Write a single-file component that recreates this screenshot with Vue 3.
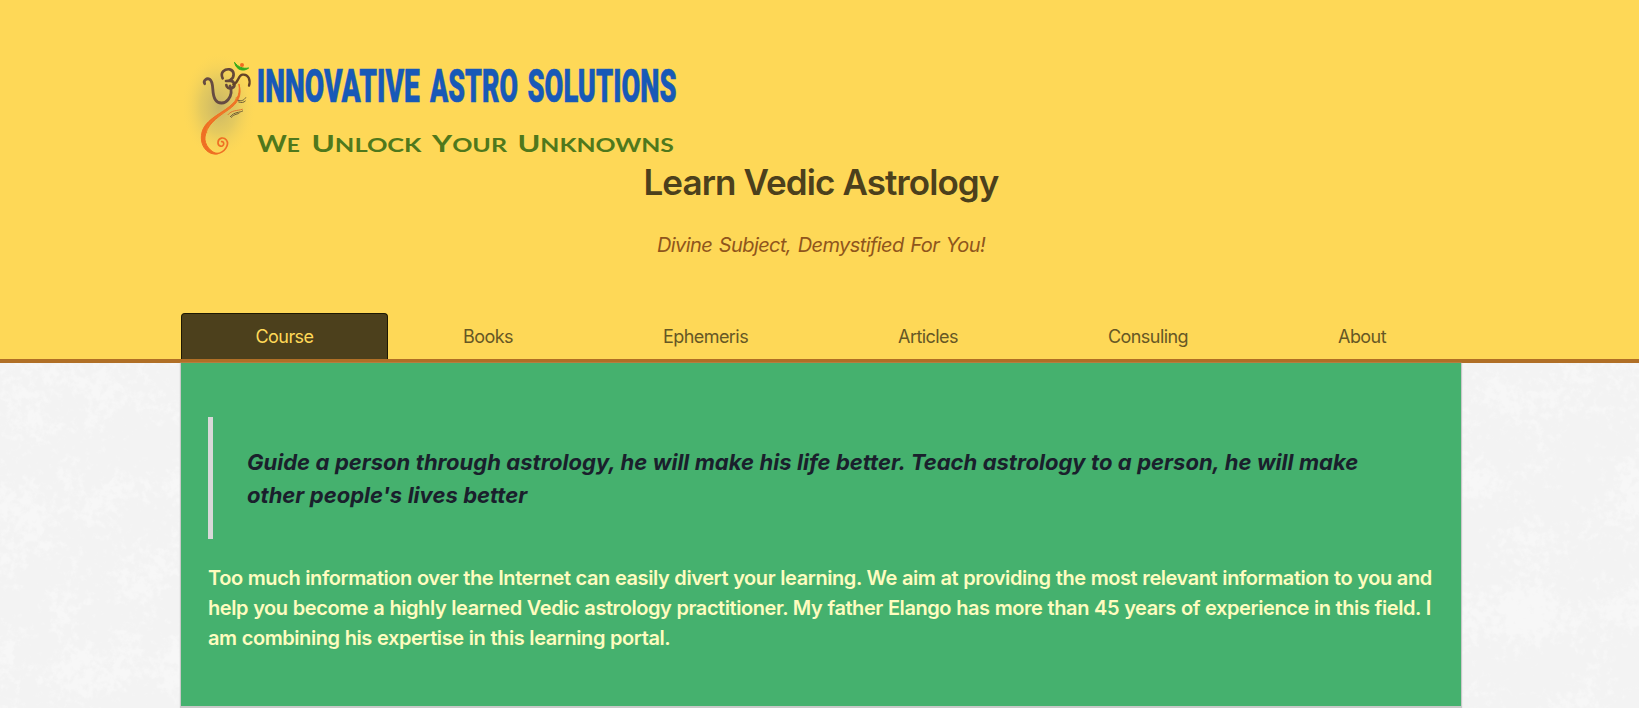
<script setup>
const tabs = ['Course', 'Books', 'Ephemeris', 'Articles', 'Consuling', 'About']
</script>

<template>
  <div class="page">
    <header class="header">
      <svg class="logo" width="510" height="110" viewBox="0 0 510 110">
        <defs>
          <radialGradient id="halo">
            <stop offset="0" stop-color="#b5a96b" stop-opacity=".75" />
            <stop offset=".5" stop-color="#cdbd66" stop-opacity=".52" />
            <stop offset="1" stop-color="#fad65a" stop-opacity="0" />
          </radialGradient>
        </defs>
        <ellipse cx="39" cy="56" rx="37" ry="53" fill="url(#halo)" />
        <g transform="scale(.33333)" fill="none" stroke-linecap="round" stroke-linejoin="round">
          <path d="M74 101C69 92 80 83 89 88C104 97 93 131 106 149C115 163 135 162 145 148C154 136 156 122 150 108" stroke="#664b42" stroke-width="8.500" />
          <path d="M128 85C119 66 135 56 149 58C164 61 165 82 151 90C147 93 140 93 138 93M147 93C163 90 169 108 156 114C147 118 139 112 139 105" stroke="#654839" stroke-width="8" />
          <path d="M160 103C177 97 173 77 187 74C206 71 212 91 207 107" stroke="#654327" stroke-width="7" />
          <path d="M164 38C168 61 192 66 206 54C190 57 175 52 164 38Z" fill="#35aa1d" stroke="#35aa1d" stroke-width="3" />
          <circle cx="186" cy="45" r="6" fill="#f06a22" />
          <path d="M177 103C182 139 167 157 137 178C97 205 64 222 64 264C64 297 91 317 113 311C94 309 72 284 75 261C79 228 105 206 144 180C175 160 187 134 177 103Z" fill="#ef6f24" stroke="#ef6f24" stroke-width="3" />
          <path d="M80 292C88 306 99 312 110 311C135 308 149 283 139 270C131 260 115 263 114 277C113 289 128 293 131 283C132 278 129 274 125 275" stroke="#ef6f24" stroke-width="5" />
          <path d="M169 142C164 169 137 183 112 199C91 213 78 228 80 249" stroke="#ef7d28" stroke-width="3" stroke-dasharray="5 2" />
          <path d="M144 194C155 180 170 183 187 178" stroke="#df7430" stroke-width="3" />
          <path d="M174 151C184 154 191 152 197 143M176 156C185 159 191 158 196 153M151 200C164 184 179 189 188 183M154 202C164 191 173 193 177 190" stroke="#6f5d35" stroke-width="3" />
        </g>
        <g class="brand" transform="scale(1 1.52)">
          <text x="76.800" y="33.900" textLength="163" lengthAdjust="spacingAndGlyphs">INNOVATIVE</text>
          <text x="250" y="33.900" textLength="88" lengthAdjust="spacingAndGlyphs">ASTRO</text>
          <text x="347.500" y="33.900" textLength="149" lengthAdjust="spacingAndGlyphs">SOLUTIONS</text>
        </g>
        <g class="motto">
          <text x="77" y="101.500" textLength="43" lengthAdjust="spacingAndGlyphs">W<tspan class="sc">E</tspan></text>
          <text x="131.500" y="101.500" textLength="110" lengthAdjust="spacingAndGlyphs">U<tspan class="sc">NLOCK</tspan></text>
          <text x="252" y="101.500" textLength="75" lengthAdjust="spacingAndGlyphs">Y<tspan class="sc">OUR</tspan></text>
          <text x="337.500" y="101.500" textLength="156.500" lengthAdjust="spacingAndGlyphs">U<tspan class="sc">NKNOWNS</tspan></text>
        </g>
      </svg>
      <h1>Learn Vedic Astrology</h1>
      <p class="tagline">Divine Subject, Demystified For You!</p>
      <nav>
        <a v-for="(t, i) in tabs" :key="t" :class="{ active: i === 0 }">{{ t }}</a>
      </nav>
    </header>
    <div class="body">
      <svg class="texture" width="1639" height="345">
        <filter id="plaster" x="0" y="0" width="100%" height="100%" color-interpolation-filters="sRGB">
          <feTurbulence type="fractalNoise" baseFrequency=".018" numOctaves="3" seed="8" result="patches" />
          <feTurbulence type="fractalNoise" baseFrequency=".14" numOctaves="3" seed="3" result="grain" />
          <feComposite in="patches" in2="grain" operator="arithmetic" k1="0" k2=".55" k3=".45" k4="0" />
          <feColorMatrix values="0 0 0 0 1  0 0 0 0 1  0 0 0 0 1  0 0 0 7 -3.5" />
        </filter>
        <rect width="1639" height="345" filter="url(#plaster)" opacity=".35" />
      </svg>
      <main>
        <blockquote>
          Guide a person through astrology, he will make his life better. Teach astrology to a person, he will make<br>
          other people's lives better
        </blockquote>
        <p class="intro">
          Too much information over the Internet can easily divert your learning. We aim at providing the most relevant information to you and<br>
          help you become a highly learned Vedic astrology practitioner. My father Elango has more than 45 years of experience in this field. I<br>
          am combining his expertise in this learning portal.
        </p>
      </main>
    </div>
  </div>
</template>

<style>
body { margin: 0; overflow: hidden; }
</style>

<style scoped>
.page { width: 1639px; height: 708px; overflow: hidden; font-family: Inter, "Liberation Sans", sans-serif; font-variant-ligatures: none; background: #f5f5f5; }
.header { box-sizing: border-box; height: 363px; padding: 50px 178px 0 181px; border-bottom: 4px solid #b06f26; background: #fed857; display: flex; flex-direction: column; }
.logo { display: block; margin-left: -1px; flex: none; overflow: visible; }
.brand { font: 900 31px Roboto, sans-serif; fill: #1859b7; stroke: #1859b7; stroke-width: .4; }
.motto { font: 700 23px Lato, sans-serif; fill: #4f781c; }
.sc { font-size: 18.500px; }
h1 { margin: 0; height: 44px; font-size: 35px; line-height: 44px; font-weight: 600; letter-spacing: -.9px; color: #4c401c; text-align: center; white-space: nowrap; }
.tagline { margin: 26px 0 0; font-size: 20px; line-height: 30px; font-style: italic; letter-spacing: -.6px; word-spacing: 1.700px; color: #8f551c; text-align: center; }
nav { display: flex; width: 1280px; height: 46px; margin-top: auto; }
nav a { box-sizing: border-box; flex: 1 1 auto; display: flex; align-items: center; justify-content: center; font-size: 18px; letter-spacing: -.56px; color: #665725; border: 1px solid transparent; border-bottom: 0; }
nav a.active { flex: 0 0 207px; color: #ffd958; background: #4c401c; border-color: #1d1803; border-radius: 4px 4px 0 0; }
.body { position: relative; height: 345px; background: #f3f3f3; }
.texture { position: absolute; inset: 0; }
main { position: relative; box-sizing: border-box; width: 1280px; height: 343px; margin-left: 181px; padding: 54px 27px 0; background: #45b16e; box-shadow: 0 1px 1px 1px #c9c9c9; }
blockquote { box-sizing: border-box; height: 122px; margin: 0; padding: 29px 0 0 34px; border-left: 5px solid #d8d8d8; font-size: 22px; line-height: 33px; font-weight: 700; font-style: italic; letter-spacing: .01px; word-spacing: .24px; color: #1a202c; white-space: nowrap; }
.intro { margin: 24px 0 0; font-size: 20px; line-height: 30px; font-weight: 600; letter-spacing: -.43px; word-spacing: .48px; color: #fefcbf; white-space: nowrap; }
</style>
